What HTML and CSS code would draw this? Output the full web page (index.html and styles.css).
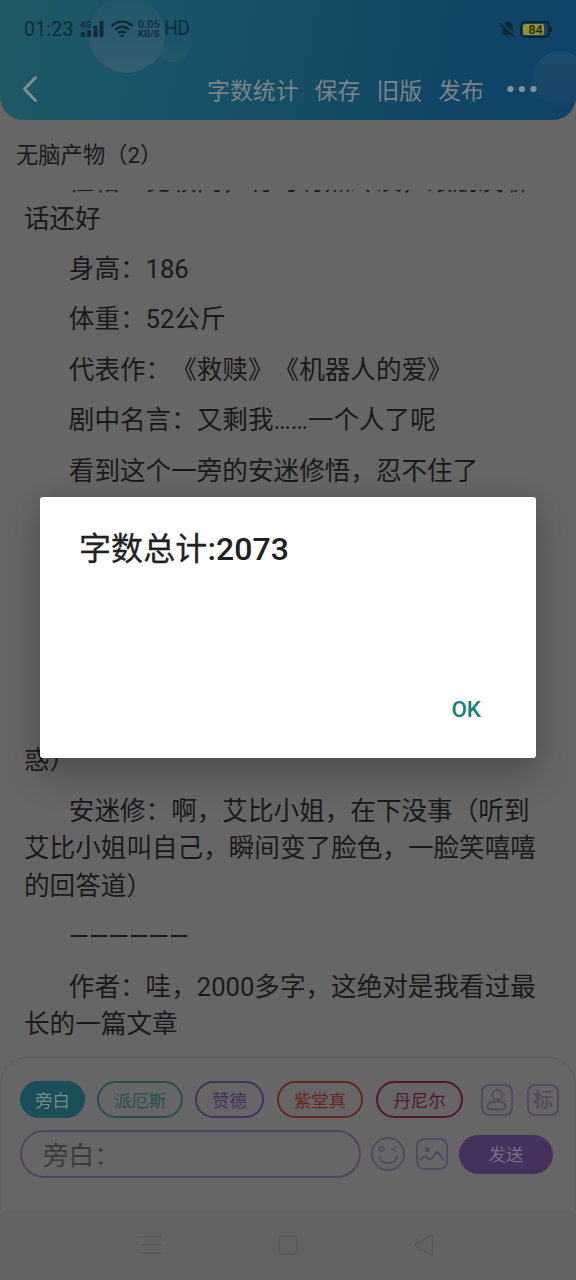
FILE: index.html
```
<!DOCTYPE html>
<html lang="zh-CN">
<head>
<meta charset="utf-8">
<title>字数统计</title>
<link rel="stylesheet" href="styles.css">
</head>
<body>
<div class="screen">
  <header class="header">
    <span class="bubble bubble-small"></span>
    <span class="bubble bubble-large"></span>
    <span class="bubble bubble-right"></span>
    <div class="status">
      <span class="clock">01:23</span>
      <svg class="signal" width="24" height="18" viewBox="0 0 24 18"><text x="0" y="7.500" class="network">4G</text><g fill="#0e2c38"><rect x="0.8" y="12" width="4" height="5" rx="1"/><rect x="7" y="10" width="4" height="7" rx="1"/><rect x="13.500" y="5.500" width="4" height="11.500" rx="1"/><rect x="19.500" y="1" width="4" height="16" rx="1"/></g></svg>
      <svg class="wifi" width="24" height="18" viewBox="0 0 24 18" fill="none" stroke="#0e2c38" stroke-width="2.500"><path d="M1.500 6Q12-3 22.500 6M5 9.700Q12 3.700 19 9.700M8.300 13Q12 10 15.700 13"/><circle cx="12" cy="15.700" r="1.500" fill="#0e2c38" stroke="none"/></svg>
      <span class="speed"><span class="rate">0.05</span><span>KB/S</span></span>
      <span class="hd">HD</span>
      <svg class="mute" width="17" height="19" viewBox="0 0 17 19"><path d="M2.500 14.500L4 12V7.500Q4 3 8 2Q9 0 10.500 2Q14 3 14 7.500V12L16 14.500V15H2ZM6.500 16H11Q9 18.800 6.500 16Z" fill="#0b2839"/><path d="M1 1.500L17 16" stroke="#0f4864" stroke-width="2"/><path d="M.5 3.500L15 17" stroke="#0b2839" stroke-width="1.700"/></svg>
      <span class="battery"><span class="level">84</span></span>
    </div>
    <nav class="toolbar">
      <svg class="back" width="18" height="30" viewBox="0 0 18 30" fill="none" stroke="#858b8c" stroke-width="3" stroke-linecap="round" stroke-linejoin="round"><path d="M13.500 3.500L2.500 15L13.500 26.500"/></svg>
      <span class="action">字数统计</span><span class="action">保存</span><span class="action">旧版</span><span class="action">发布</span>
      <svg class="more" width="30" height="8" viewBox="0 0 30 8" fill="#8291a0"><circle cx="3.500" cy="4" r="3.100"/><circle cx="15" cy="4" r="3.100"/><circle cx="26.500" cy="4" r="3.100"/></svg>
    </nav>
  </header>
  <h1 class="title">无脑产物（2）</h1>
  <main class="article">
    <p>性格：比较闷，有时有点冷淡，跟朋友聊<br>话还好</p>
    <p>身高：186</p>
    <p>体重：52公斤</p>
    <p>代表作：《救赎》《机器人的爱》</p>
    <p>剧中名言：又剩我……一个人了呢</p>
    <p>看到这个一旁的安迷修悟，忍不住了</p>
    <p class="continued">惑）</p>
    <p>安迷修：啊，艾比小姐，在下没事（听到<br>艾比小姐叫自己，瞬间变了脸色，一脸笑嘻嘻<br>的回答道）</p>
    <p>——————</p>
    <p>作者：哇，2000多字，这绝对是我看过最<br>长的一篇文章</p>
  </main>
  <section class="composer">
    <div class="roles">
      <span class="chip chip-active">旁白</span>
      <span class="chip chip-teal">派厄斯</span>
      <span class="chip chip-purple">赞德</span>
      <span class="chip chip-red">紫堂真</span>
      <span class="chip chip-pink">丹尼尔</span>
      <span class="tool"><svg width="28" height="28" viewBox="2 2 28 28" fill="none" stroke="#53495f" stroke-width="1.800"><circle cx="16.500" cy="11" r="5"/><path d="M9 25.500Q6.500 25.500 6.500 22.500Q7 18 12 18H19Q24 18 24.500 22.500Q24.500 25.500 22 25.500Z"/><path d="M23.500 11H25M23.500 14H25M23.500 17H25" stroke-width="1.200"/></svg></span>
      <span class="tool tool-tag">标</span>
    </div>
    <div class="entry">
      <div class="input">旁白：</div>
      <svg class="smile" width="34" height="34" viewBox="0 0 34 34" fill="none" stroke="#53485f" stroke-width="1.800" stroke-linecap="round"><circle cx="17" cy="17" r="16"/><circle cx="10.500" cy="12" r="2.200" stroke-width="1.400"/><path d="M25 10L21.500 12.200L25 14.500" stroke-width="1.400"/><path d="M8 19.500C11 28.500 23 28.500 26.500 19.500"/></svg>
      <svg class="photo" width="32" height="32" viewBox="0 0 32 32" fill="none" stroke="#53485f" stroke-width="1.800" stroke-linecap="round"><rect x="1" y="1" width="30" height="30" rx="7"/><circle cx="11" cy="11.500" r="2.500" fill="#53485f" stroke="none"/><path d="M4.500 21.500C7.500 17.500 9.500 18 11.500 20S16 21.500 17.500 18S22 12 24.500 18L28 22"/></svg>
      <span class="send">发送</span>
    </div>
  </section>
  <footer class="system-nav">
    <svg width="20" height="20" viewBox="0 0 20 20" stroke="#585858" stroke-width="1.500"><path d="M0 1.500H20M0 9.800H20M0 18.200H20"/></svg>
    <svg width="20" height="20" viewBox="0 0 20 20" fill="none" stroke="#585858" stroke-width="1.500"><rect x="1" y="1" width="18" height="18" rx="3.500"/></svg>
    <svg width="20" height="22" viewBox="0 0 20 22" fill="none" stroke="#585858" stroke-width="1.500" stroke-linejoin="round"><path d="M18.500 2.500V19.500Q18.500 21.500 16.500 20.500L1.500 12Q.5 11 1.500 10L16.500 1.500Q18.500 .5 18.500 2.500Z"/></svg>
  </footer>
  <div class="dialog" role="dialog">
    <h2 class="dialog-title"><span class="dialog-label">字数总计</span>:2073</h2>
    <div class="dialog-action">OK</div>
  </div>
</div>
</body>
</html>
```
FILE: styles.css
```
* { box-sizing: border-box; }
body {
  margin: 0;
  background: #666;
  color: #1a1a1a;
  font-family: Roboto, "Noto Sans CJK SC", sans-serif;
  text-spacing-trim: space-all;
}
svg { display: block; flex: none; }
.screen {
  position: relative;
  width: 576px;
  height: 1280px;
  overflow: hidden;
  display: flex;
  flex-direction: column;
}
.header {
  position: relative;
  height: 120px;
  flex: none;
  overflow: hidden;
  border-radius: 0 0 23px 23px;
  background: linear-gradient(100deg, #1f5961 0%, #1a556a 22%, #154d64 55%, #104565 78%, #0f4267 100%);
}
.bubble { position: absolute; border-radius: 50%; }
.bubble-large { left: 89px; top: -3px; width: 76px; height: 76px; background: linear-gradient(#21566a, #335f70); }
.bubble-small { left: 154px; top: 25px; width: 37px; height: 37px; background: linear-gradient(#19506a, #24586c); }
.bubble-right { left: 533px; top: 51px; width: 54px; height: 54px; background: linear-gradient(#1d4a6b, #154668); }
.status {
  position: relative;
  display: flex;
  align-items: center;
  height: 58px;
  padding: 0 25px 0 24px;
  color: #0e2c38;
}
.clock { width: 56px; font-size: 19.500px; letter-spacing: .2px; }
.network { font: bold 9px Roboto, sans-serif; fill: #0e2c38; }
.wifi { margin-left: 6px; }
.speed { display: flex; flex-direction: column; margin-left: 4px; width: 26px; font-size: 9.500px; line-height: 9px; font-weight: 500; white-space: nowrap; }
.rate { font-size: 11px; }
.hd { font-size: 19.500px; line-height: 20px; letter-spacing: -.6px; }
.mute { margin-left: auto; }
.battery {
  position: relative;
  margin: 0 1px 0 4px;
  width: 30px;
  height: 17px;
  padding: 1px;
  border: 2px solid #0b2432;
  border-radius: 5px;
}
.battery::after { content: ""; position: absolute; right: -4px; top: 4px; width: 2px; height: 5px; background: #0b2432; }
.level { display: block; width: 21px; height: 11px; border-radius: 2px; background: #8f942f; color: #20270f; font-size: 12.500px; line-height: 11.500px; font-weight: 500; text-align: center; padding-left: 4px; }
.toolbar {
  position: relative;
  display: flex;
  align-items: center;
  gap: 16px;
  height: 62px;
  padding: 0 39px 0 22px;
  color: #7b8488;
  font-size: 22.900px;
  line-height: 30px;
}
.action { padding-top: 5px; }
.back { margin-right: auto; }
.more { margin-left: 7px; }
.title { margin: 0; height: 70px; flex: none; padding: 19px 16px 0; font-size: 22.300px; font-weight: 400; line-height: 33px; }
.article {
  height: 866px;
  flex: none;
  overflow: hidden;
  padding: 0 24px;
  font-size: 25.600px;
  line-height: 37.600px;
  white-space: nowrap;
}
.article p { margin: 0 0 12.800px; text-indent: 44.800px; }
.article p:first-child { margin-top: -27px; }
.article .continued { margin-top: 252px; text-indent: 0; }
.composer {
  height: 154px;
  flex: none;
  border: 2px solid #606060;
  border-bottom: 0;
  border-radius: 28px 28px 0 0;
  padding: 23px 15px 0 18px;
}
.roles { display: flex; align-items: center; height: 37px; }
.chip {
  height: 37px;
  border: 2px solid;
  border-radius: 19px;
  font-size: 17.400px;
  line-height: 36px;
  text-align: center;
  margin-right: 12px;
  width: 86px;
  flex: none;
}
.chip-active { width: 65px; background: #1a4f59; border-color: #1a4f59; color: #76898c; }
.chip-teal { color: #264f51; }
.chip-purple { width: 69px; margin-right: 13px; color: #48305c; }
.chip-red { margin-right: 13px; color: #68261f; }
.chip-pink { width: 87px; margin-right: 18px; color: #551535; }
.tool { width: 32px; height: 32px; flex: none; border: 2px solid #53495f; border-radius: 8px; display: grid; place-items: center; }
.tool-tag { margin-left: 14px; color: #53495f; font-size: 20px; line-height: 28px; font-weight: 500; }
.entry { display: flex; align-items: center; height: 48px; margin-top: 12px; }
.input { width: 341px; height: 48px; flex: none; border: 2px solid #50475e; border-radius: 24px; padding-left: 21px; color: #3b3b3b; font-size: 25.600px; line-height: 48px; }
.smile { margin-left: 10px; }
.photo { margin-left: 11px; }
.send { width: 94px; height: 39px; margin-left: 11px; flex: none; border-radius: 20px; background: #46305e; color: #777080; font-size: 17.400px; line-height: 41px; text-align: center; }
.system-nav { height: 70px; flex: none; background: #636363; display: flex; justify-content: space-between; align-items: center; padding: 0 142px 0 141px; }
.dialog {
  position: absolute;
  left: 40px;
  top: 497px;
  width: 496px;
  height: 260.500px;
  padding: 30px 55px 31px 39px;
  border-radius: 3px;
  background: #fff;
  box-shadow: 0 18px 36px rgba(0, 0, 0, .2), 0 0 22px rgba(0, 0, 0, .1);
  display: flex;
  flex-direction: column;
  justify-content: space-between;
}
.dialog-title { margin: 0; color: #212121; font-size: 32px; font-weight: 500; line-height: 44px; letter-spacing: .1px; }
.dialog-label { font-weight: 400; -webkit-text-stroke: .3px #212121; }
.dialog-action { align-self: flex-end; color: #148272; font-size: 22.400px; font-weight: 500; line-height: 36px; }
```
